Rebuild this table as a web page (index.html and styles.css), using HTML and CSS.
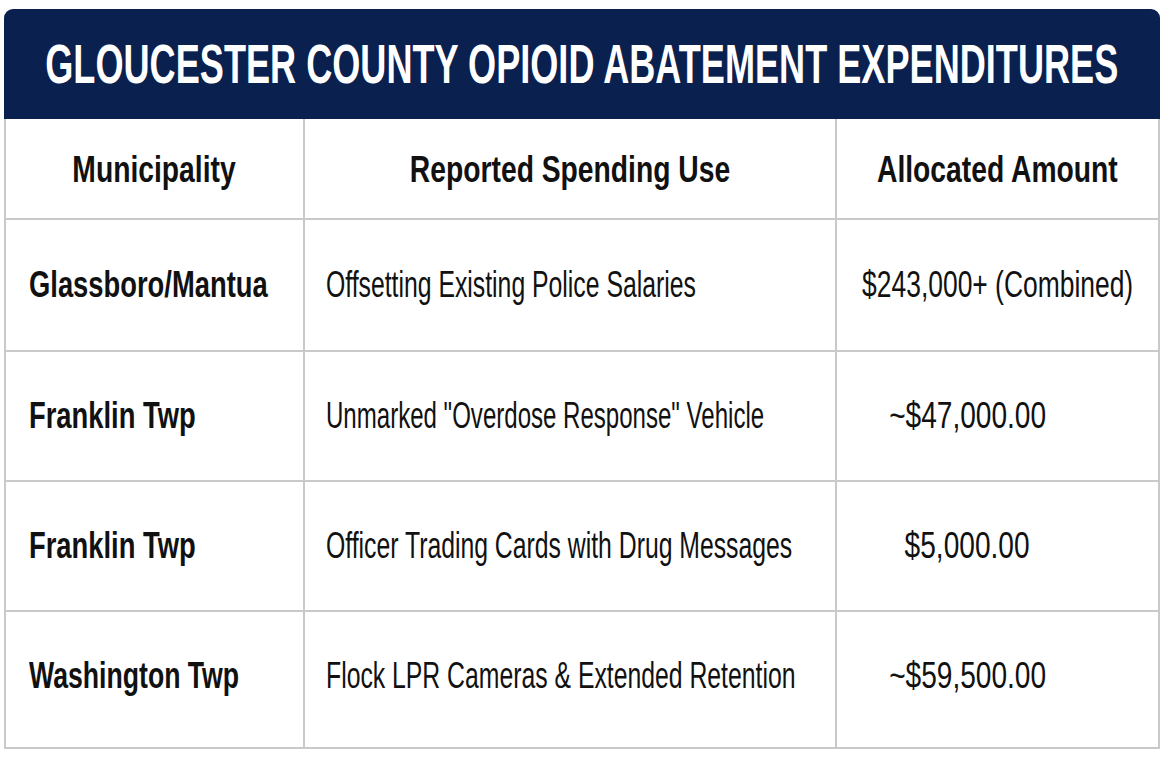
FILE: index.html
```html
<!DOCTYPE html>
<html lang="en">
<head>
<meta charset="utf-8">
<title>Gloucester County Opioid Abatement Expenditures</title>
<link rel="stylesheet" href="styles.css">
</head>
<body>
<div class="sheet">
  <div class="title-bar"><h1 class="title"><span class="sq sq-title">GLOUCESTER COUNTY OPIOID ABATEMENT EXPENDITURES</span></h1></div>
  <div class="grid">
    <div class="cell head center"><span class="sq sq-head">Municipality</span></div>
    <div class="cell head center"><span class="sq sq-head">Reported Spending Use</span></div>
    <div class="cell head center"><span class="sq sq-head">Allocated Amount</span></div>

    <div class="cell r1 muni"><span class="sq sq-bold left">Glassboro/Mantua</span></div>
    <div class="cell r1 use"><span class="sq sq-use left">Offsetting Existing Police Salaries</span></div>
    <div class="cell r1 center"><span class="sq sq-mixed">$243,000+ (Combined)</span></div>

    <div class="cell r2 muni"><span class="sq sq-bold left">Franklin Twp</span></div>
    <div class="cell r2 use"><span class="sq sq-use sq-quoted left">Unmarked "Overdose Response" Vehicle</span></div>
    <div class="cell r2 center amt"><span class="sq sq-num">~$47,000.00</span></div>

    <div class="cell r3 muni"><span class="sq sq-bold left">Franklin Twp</span></div>
    <div class="cell r3 use"><span class="sq sq-use left">Officer Trading Cards with Drug Messages</span></div>
    <div class="cell r3 center amt"><span class="sq sq-num">$5,000.00</span></div>

    <div class="cell r4 muni"><span class="sq sq-bold sq-narrow left">Washington Twp</span></div>
    <div class="cell r4 use"><span class="sq sq-use left">Flock LPR Cameras &amp; Extended Retention</span></div>
    <div class="cell r4 center amt"><span class="sq sq-num">~$59,500.00</span></div>
  </div>
</div>
</body>
</html>
```
FILE: styles.css
```css
* { box-sizing: border-box; }
html, body { margin: 0; padding: 0; background: #ffffff; }
body { font-family: "Liberation Sans", Arial, sans-serif; color: #111111; }

.sheet {
  width: 1156px;
  margin: 9px 0 0 4px;
}

.title-bar {
  height: 110px;
  background: #0a204f;
  border-radius: 9px 9px 0 0;
  display: flex;
  align-items: center;
  justify-content: center;
}
.title {
  margin: 0;
  font-size: 56px;
  font-weight: 700;
  color: #ffffff;
  line-height: 1;
  white-space: nowrap;
  display: flex;
  justify-content: center;
  width: 100%;
}

.grid {
  display: grid;
  grid-template-columns: 297px 530px 321px;
  grid-template-rows: 99px 130px 128px 128px 135px;
  column-gap: 2px;
  row-gap: 2px;
  padding: 0 2px 2px 2px;
  background: #c9c9c9;
}

.cell {
  background: #ffffff;
  display: flex;
  align-items: center;
  white-space: nowrap;
  overflow: visible;
}
.center { justify-content: center; }
.muni { padding-left: 23px; }
.use { padding-left: 21px; }
.amt { padding-right: 60px; }
.r4 { padding-bottom: 8px; }

.sq {
  display: inline-block;
  line-height: 1;
  font-size: 36px;
  transform-origin: center center;
}
.sq.left { transform-origin: left center; }

.sq-title { font-size: 56px; transform: scaleX(0.645); }
.sq-head { font-weight: 700; transform: scaleX(0.785); margin-top: 2px; }
.sq-bold { font-weight: 700; transform: scaleX(0.76); }
.sq-bold.sq-narrow { transform: scaleX(0.74); }
.sq-use { font-weight: 400; transform: scaleX(0.688); }
.sq-use.sq-quoted { transform: scaleX(0.668); }
.sq-mixed { font-weight: 400; transform: scaleX(0.734); }
.sq-num { font-weight: 400; transform: scaleX(0.78); }
```
